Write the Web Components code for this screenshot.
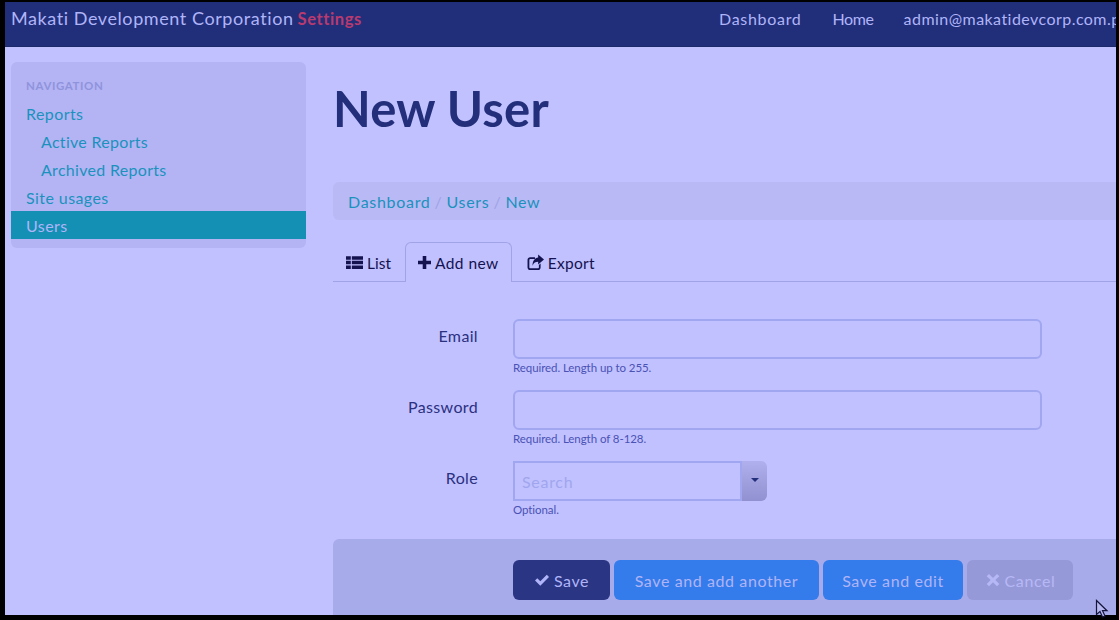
<!DOCTYPE html>
<html>
<head>
<meta charset="utf-8">
<title>New User</title>
<style>
    html, body { margin: 0; height: 100%; background: #000; overflow: hidden; }
    body { font-family: "Lato", "Liberation Sans", sans-serif; }
</style>
</head>
<body>
<admin-shell>
    <top-bar slot="top" brand="Makati Development Corporation" section="Settings">
        <a>Dashboard</a><a class="short">Home</a><a class="mail">admin@makatidevcorp.com.ph</a>
    </top-bar>
    <side-nav slot="side">
        <nav-item heading>NAVIGATION</nav-item>
        <nav-item>Reports</nav-item>
        <nav-item sub>Active Reports</nav-item>
        <nav-item sub>Archived Reports</nav-item>
        <nav-item>Site usages</nav-item>
        <nav-item active>Users</nav-item>
    </side-nav>
    <page-title>New User</page-title>
    <bread-crumbs>
        <span>Dashboard</span><span>Users</span><span>New</span>
    </bread-crumbs>
    <tab-strip>
        <tab-item icon="list">List</tab-item>
        <tab-item icon="plus" active>Add new</tab-item>
        <tab-item icon="export">Export</tab-item>
    </tab-strip>
    <form-row label="Email" help="Required. Length up to 255."><text-field></text-field></form-row>
    <form-row label="Password" help="Required. Length of 8-128."><text-field></text-field></form-row>
    <form-row label="Role" help="Optional."><search-select placeholder="Search"></search-select></form-row>
    <form-actions>
        <action-button kind="dark" icon="check" wide="97">Save</action-button>
        <action-button kind="blue" wide="205">Save and add another</action-button>
        <action-button kind="blue" wide="140">Save and edit</action-button>
        <action-button kind="muted" icon="cross" wide="106">Cancel</action-button>
    </form-actions>
</admin-shell>

<script>
    // Icons are drawn on a 16x16 box so they scale with the font size.
    const ICONS = {
        list: '<path d="M0 2h4.500v3.300H0zM5.500 2H16v3.300H5.500zM0 6.400h4.500v3.300H0zM5.500 6.400H16v3.300H5.500zM0 10.800h4.500v3.300H0zM5.500 10.800H16v3.300H5.500z"/>',
        plus: '<path d="M5.800 0h4.400v5.800H16v4.400h-5.800V16H5.800v-5.800H0V5.800h5.800z"/>',
        export: '<path d="M3 3h4.500v1.600H3.200c-.6 0-1 .4-1 1v6.800c0 .6.4 1 1 1h7c.6 0 1-.4 1-1v-2l1.600-1.400v3.600c0 1.400-1.100 2.500-2.500 2.500H3c-1.400 0-2.500-1.100-2.500-2.500V5.500C.5 4.100 1.600 3 3 3z"/><path d="M10.500.5L16 5.200l-5.500 4.700V7.200C8 7.200 6.200 8 5.300 11 5 6.500 7.500 3.600 10.500 3.300z"/>',
        check: '<path d="M1 8.500l2.300-2.300 3 3L12.800 2.700 15 5l-8.700 8.700z"/>',
        cross: '<path d="M4 2l4 4 4-4 2.300 2.300-4 3.700 4 4L12 14.300l-4-4-4 4L1.700 12l4-4-4-3.700z"/>'
    };

    function iconSvg(name) {
        return `<svg viewBox="0 0 16 16" width="1em" height="1em" fill="currentColor" aria-hidden="true">${ICONS[name]}</svg>`;
    }

    /**
     * Small helper so each element only has to say what goes in its shadow root.
     */
    class ShadowElement extends HTMLElement {
        constructor() {
            super();

            this.attachShadow({ mode: 'open' });
        }

        connectedCallback() {
            this.shadowRoot.innerHTML = this.render();
        }
    }

    class AdminShell extends ShadowElement {
        render() {
            return `
                <style>
                    :host { display: block; position: relative; box-sizing: border-box; height: 620px; width: 1119px; padding: 2px 3px 5px 5px; overflow: hidden; }
                    .page { height: 100%; background: #c1c1ff; overflow: hidden; display: flex; flex-direction: column; }
                    .body { display: flex; flex: 1; min-height: 0; }
                    .side { flex: none; width: 295px; padding: 15px 0 0 6px; }
                    .main { flex: none; width: 790px; margin-left: 27px; }
                    /* the mouse pointer caught in the screenshot */
                    .pointer { position: absolute; left: 1095px; top: 599px; }
                </style>
                <div class="page">
                    <slot name="top"></slot>
                    <div class="body">
                        <div class="side"><slot name="side"></slot></div>
                        <div class="main"><slot></slot></div>
                    </div>
                </div>
                <svg class="pointer" width="14" height="20" viewBox="0 0 14 20" aria-hidden="true">
                    <path d="M1.500 1.500v14l3.500-3 2.500 5.500 2.500-1-2.500-5.300h4.500z" fill="#b7baf0" stroke="#14143c" stroke-width="1.200"/>
                </svg>
            `;
        }
    }

    class TopBar extends ShadowElement {
        render() {
            return `
                <style>
                    :host { display: flex; flex: none; align-items: flex-start; height: 45px; box-sizing: border-box; border-bottom: 1px solid #1c2a6c; background: #212f7b; color: #b0b4f8; white-space: nowrap; overflow: hidden; }
                    .brand { display: flex; align-items: baseline; gap: 4px; padding: 5px 0 0 6px; font-size: 18px; line-height: 23px; letter-spacing: .58px; }
                    .section { color: #b83a6e; font-size: 16.500px; font-weight: 700; letter-spacing: .6px; }
                    nav { margin-left: auto; width: 397px; flex: none; display: flex; gap: 31px; padding: 5px 0 0 0; line-height: 23px; font-size: 16px; letter-spacing: .7px; }
                    ::slotted(a) { color: #b0b4f8; }
                    ::slotted(a.short) { letter-spacing: -.4px; }
                    ::slotted(a.mail) { margin-left: -1px; letter-spacing: .45px; }
                </style>
                <div class="brand"><span>${this.getAttribute('brand')}</span> <span class="section">${this.getAttribute('section')}</span></div>
                <nav><slot></slot></nav>
            `;
        }
    }

    class SideNav extends ShadowElement {
        render() {
            return `
                <style>
                    :host { display: block; background: #b4b4f4; border-radius: 6px; padding: 10px 0 9px; }
                </style>
                <slot></slot>
            `;
        }
    }

    class NavItem extends ShadowElement {
        render() {
            return `
                <style>
                    :host { display: block; height: 28px; line-height: 30px; padding-left: 15px; color: #1a92bd; font-size: 16px; letter-spacing: .42px; }
                    :host([sub]) { padding-left: 30px; letter-spacing: .3px; }
                    :host([active]) { background: #1390b4; color: #b0b4f8; }
                    :host([heading]) { height: 27px; line-height: 28px; color: #8f93dc; font-size: 11.500px; font-weight: 700; letter-spacing: .6px; }
                </style>
                <slot></slot>
            `;
        }
    }

    class PageTitle extends ShadowElement {
        render() {
            return `
                <style>
                    :host { display: block; height: 135px; padding-top: 31px; box-sizing: border-box; color: #232f7a; font-size: 49px; line-height: 60px; font-weight: 700; letter-spacing: .2px; }
                </style>
                <slot></slot>
            `;
        }
    }

    class BreadCrumbs extends ShadowElement {
        render() {
            return `
                <style>
                    :host { display: flex; height: 38px; align-items: center; padding-left: 15px; background: #b9b9f5; border-radius: 6px 0 0 6px; color: #1a92bd; font-size: 16px; letter-spacing: .7px; }
                    ::slotted(span:not(:last-child))::after { content: "/"; color: #a0a3e6; padding: 0 4px; }
                </style>
                <slot></slot>
            `;
        }
    }

    class TabStrip extends ShadowElement {
        render() {
            return `
                <style>
                    :host { display: flex; height: 40px; box-sizing: border-box; margin-top: 22px; border-bottom: 1px solid #a0a3e6; }
                </style>
                <slot></slot>
            `;
        }
    }

    class TabItem extends ShadowElement {
        render() {
            return `
                <style>
                    :host { display: flex; align-items: center; gap: 4px; height: 40px; box-sizing: border-box; padding: 0 12px; border: 1px solid transparent; border-bottom: 0; border-radius: 6px 6px 0 0; color: #14124f; font-size: 15.500px; letter-spacing: .45px; }
                    :host([active]) { background: #c1c1ff; border-color: #a0a3e6; }
                    :host([icon="list"]) { padding-right: 13px; letter-spacing: 0; }
                    :host([icon="export"]) { padding-left: 14px; letter-spacing: .3px; }
                    svg { font-size: 17px; }
                    :host([icon="plus"]) svg { font-size: 13px; }
                </style>
                ${iconSvg(this.getAttribute('icon'))}<slot></slot>
            `;
        }
    }

    class FormRow extends ShadowElement {
        render() {
            return `
                <style>
                    :host { display: grid; grid-template-columns: 145px auto; column-gap: 35px; margin-bottom: 15px; }
                    :host(:first-of-type) { margin-top: 37px; }
                    label { text-align: right; padding-top: 5px; line-height: 23px; font-size: 16px; letter-spacing: .35px; color: #2b307f; }
                    .help { margin-top: 1px; font-size: 11.500px; line-height: 15px; color: #4a52b4; letter-spacing: -.07px; }
                </style>
                <label>${this.getAttribute('label')}</label>
                <div>
                    <slot></slot>
                    <div class="help">${this.getAttribute('help')}</div>
                </div>
            `;
        }
    }

    class TextField extends ShadowElement {
        render() {
            return `
                <style>
                    :host { display: block; width: 529px; height: 40px; box-sizing: border-box; border: 2px solid #a0a6f0; border-radius: 6px; }
                </style>
            `;
        }
    }

    class SearchSelect extends ShadowElement {
        render() {
            return `
                <style>
                    :host { display: flex; width: 254px; height: 40px; }
                    .box { box-sizing: border-box; width: 229px; height: 40px; padding: 1px 0 0 7px; border: 2px solid #a0a6f0; line-height: 36px; font-size: 16px; letter-spacing: .7px; color: #a0a6ee; }
                    .toggle { flex: 1; display: flex; align-items: center; justify-content: center; background: linear-gradient(#b0b0ee, #9190d0); border-radius: 0 6px 6px 0; }
                    .caret { border: 4px solid transparent; border-top-color: #232f7a; border-bottom: 0; margin-top: -3px; }
                </style>
                <div class="box">${this.getAttribute('placeholder')}</div>
                <div class="toggle"><div class="caret"></div></div>
            `;
        }
    }

    class FormActions extends ShadowElement {
        render() {
            return `
                <style>
                    :host { display: flex; gap: 4px; height: 76px; box-sizing: border-box; margin-top: 22px; padding: 21px 0 0 180px; background: #a8abea; border-radius: 6px 0 0 0; }
                </style>
                <slot></slot>
            `;
        }
    }

    class ActionButton extends ShadowElement {
        render() {
            const icon = this.getAttribute('icon');

            return `
                <style>
                    :host { display: flex; align-items: center; justify-content: center; gap: 4px; flex: none; width: ${this.getAttribute('wide')}px; height: 40px; box-sizing: border-box; border-radius: 6px; font-size: 16px; letter-spacing: .6px; color: #b0b4f8; }
                    :host([kind="dark"]) { background: #2a3584; }
                    :host([kind="blue"]) { background: #347beb; }
                    :host([kind="muted"]) { background: #9699d8; color: #b6b8f6; }
                </style>
                ${icon ? iconSvg(icon) : ''}<slot></slot>
            `;
        }
    }

    customElements.define('admin-shell', AdminShell);
    customElements.define('top-bar', TopBar);
    customElements.define('side-nav', SideNav);
    customElements.define('nav-item', NavItem);
    customElements.define('page-title', PageTitle);
    customElements.define('bread-crumbs', BreadCrumbs);
    customElements.define('tab-strip', TabStrip);
    customElements.define('tab-item', TabItem);
    customElements.define('form-row', FormRow);
    customElements.define('text-field', TextField);
    customElements.define('search-select', SearchSelect);
    customElements.define('form-actions', FormActions);
    customElements.define('action-button', ActionButton);
</script>
</body>
</html>
